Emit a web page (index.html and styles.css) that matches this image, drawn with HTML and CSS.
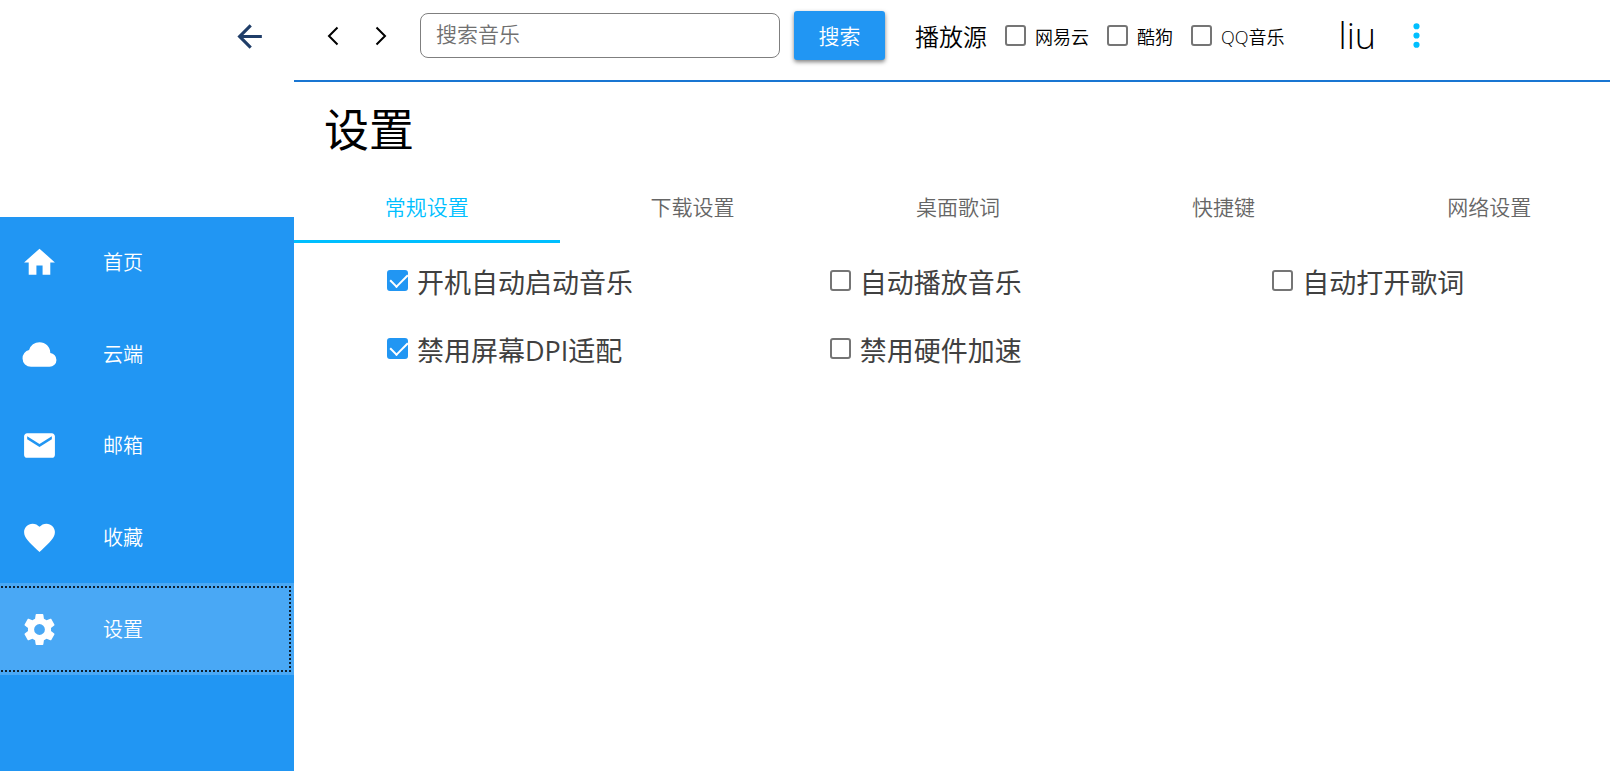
FILE: index.html
```html
<!DOCTYPE html>
<html lang="zh-CN">
<head>
<meta charset="utf-8">
<title>设置</title>
<link rel="stylesheet" href="styles.css">
</head>
<body>
<div class="app">
  <aside class="sidebar">
    <div class="sidebar-top">
      <button class="icon-button back" type="button" aria-label="返回"><svg class="icon" viewBox="0 0 24 24"><path d="M20,11V13H8L13.5,18.5L12.08,19.92L4.16,12L12.08,4.08L13.5,5.5L8,11H20Z"/></svg></button>
    </div>
    <nav class="menu">
      <a class="menu-item" href="#home"><svg class="icon" viewBox="0 0 24 24"><path d="M10,20V14H14V20H19V12H22L12,3L2,12H5V20H10Z"/></svg><span>首页</span></a>
      <a class="menu-item" href="#cloud"><svg class="icon" viewBox="0 0 24 24"><path d="M6.5 20Q4.22 20 2.61 18.43 1 16.85 1 14.58 1 12.63 2.17 11.1 3.35 9.57 5.25 9.15 5.88 6.85 7.75 5.43 9.63 4 12 4 14.93 4 16.96 6.04 19 8.07 19 11 20.73 11.2 21.86 12.5 23 13.78 23 15.5 23 17.38 21.69 18.69 20.38 20 18.5 20Z"/></svg><span>云端</span></a>
      <a class="menu-item" href="#mail"><svg class="icon" viewBox="0 0 24 24"><path d="M20,8L12,13L4,8V6L12,11L20,6M20,4H4C2.89,4 2,4.89 2,6V18A2,2 0 0,0 4,20H20A2,2 0 0,0 22,18V6C22,4.89 21.1,4 20,4Z"/></svg><span>邮箱</span></a>
      <a class="menu-item" href="#favorites"><svg class="icon" viewBox="0 0 24 24"><path d="M12,21.35L10.55,20.03C5.4,15.36 2,12.27 2,8.5C2,5.41 4.42,3 7.5,3C9.24,3 10.91,3.81 12,5.08C13.09,3.81 14.76,3 16.5,3C19.58,3 22,5.41 22,8.5C22,12.27 18.6,15.36 13.45,20.03L12,21.35Z"/></svg><span>收藏</span></a>
      <a class="menu-item active" href="#settings"><svg class="icon" viewBox="0 0 24 24"><path d="M12,15.5A3.5,3.5 0 0,1 8.5,12A3.5,3.5 0 0,1 12,8.5A3.5,3.5 0 0,1 15.5,12A3.5,3.5 0 0,1 12,15.5M19.43,12.97C19.47,12.65 19.5,12.33 19.5,12C19.5,11.67 19.47,11.34 19.43,11L21.54,9.37C21.73,9.22 21.78,8.95 21.66,8.73L19.66,5.27C19.54,5.05 19.27,4.96 19.05,5.05L16.56,6.05C16.04,5.66 15.5,5.32 14.87,5.07L14.5,2.42C14.46,2.18 14.25,2 14,2H10C9.75,2 9.54,2.18 9.5,2.42L9.13,5.07C8.5,5.32 7.96,5.66 7.44,6.05L4.95,5.05C4.73,4.96 4.46,5.05 4.34,5.27L2.34,8.73C2.21,8.95 2.27,9.22 2.46,9.37L4.57,11C4.53,11.34 4.5,11.67 4.5,12C4.5,12.33 4.53,12.65 4.57,12.97L2.46,14.63C2.27,14.78 2.21,15.05 2.34,15.27L4.34,18.73C4.46,18.95 4.73,19.03 4.95,18.95L7.44,17.94C7.96,18.34 8.5,18.68 9.13,18.93L9.5,21.58C9.54,21.82 9.75,22 10,22H14C14.25,22 14.46,21.82 14.5,21.58L14.87,18.93C15.5,18.67 16.04,18.34 16.56,17.94L19.05,18.95C19.27,19.03 19.54,18.95 19.66,18.73L21.66,15.27C21.78,15.05 21.73,14.78 21.54,14.63L19.43,12.97Z"/></svg><span>设置</span></a>
    </nav>
  </aside>

  <main class="main">
    <header class="toolbar">
      <div class="history">
        <button class="icon-button" type="button" aria-label="后退"><svg class="chevron" viewBox="0 0 12 20"><path d="M10.500 1.500L2 10L10.500 18.500"/></svg></button>
        <button class="icon-button" type="button" aria-label="前进"><svg class="chevron" viewBox="0 0 12 20"><path d="M1.500 1.500L10 10L1.500 18.500"/></svg></button>
      </div>
      <form class="search">
        <input class="search-box" type="text" placeholder="搜索音乐" aria-label="搜索音乐">
        <button class="search-button" type="button">搜索</button>
      </form>
      <div class="sources">
        <span class="sources-title">播放源</span>
        <label class="source"><input class="check" type="checkbox"><span>网易云</span></label>
        <label class="source"><input class="check" type="checkbox"><span>酷狗</span></label>
        <label class="source"><input class="check" type="checkbox"><span>QQ音乐</span></label>
      </div>
      <span class="user">liu</span>
      <button class="icon-button more" type="button" aria-label="更多"><svg class="icon" viewBox="0 0 24 24"><path d="M12,16A2,2 0 0,1 14,18A2,2 0 0,1 12,20A2,2 0 0,1 10,18A2,2 0 0,1 12,16M12,10A2,2 0 0,1 14,12A2,2 0 0,1 12,14A2,2 0 0,1 10,12A2,2 0 0,1 12,10M12,4A2,2 0 0,1 14,6A2,2 0 0,1 12,8A2,2 0 0,1 10,6A2,2 0 0,1 12,4Z"/></svg></button>
    </header>

    <h1 class="title">设置</h1>

    <div class="panel">
      <div class="tabs" role="tablist">
        <button class="tab selected" type="button" role="tab" aria-selected="true">常规设置</button>
        <button class="tab" type="button" role="tab">下载设置</button>
        <button class="tab" type="button" role="tab">桌面歌词</button>
        <button class="tab" type="button" role="tab">快捷键</button>
        <button class="tab" type="button" role="tab">网络设置</button>
      </div>
      <div class="options">
        <label class="option"><input class="check" type="checkbox" checked><span>开机自动启动音乐</span></label>
        <label class="option"><input class="check" type="checkbox"><span>自动播放音乐</span></label>
        <label class="option"><input class="check" type="checkbox"><span>自动打开歌词</span></label>
        <label class="option"><input class="check" type="checkbox" checked><span>禁用屏幕DPI适配</span></label>
        <label class="option"><input class="check" type="checkbox"><span>禁用硬件加速</span></label>
      </div>
    </div>
  </main>
</div>
</body>
</html>
```

FILE: styles.css
```css
* {
  box-sizing: border-box;
}

body {
  margin: 0;
  background: #fff;
  color: #000;
  font-family: "Open Sans", "Noto Sans CJK SC", sans-serif;
  font-weight: 350;
}

button,
input {
  margin: 0;
  font: inherit;
}

.app {
  display: flex;
  min-height: 100vh;
  overflow: hidden;
}

.icon {
  display: block;
  width: 37px;
  height: 37px;
  fill: currentColor;
}

.icon-button {
  display: block;
  padding: 0;
  border: 0;
  background: none;
  color: inherit;
}

/* Sidebar */

.sidebar {
  display: flex;
  flex: 0 0 294px;
  flex-direction: column;
  background: #2196f3;
}

.sidebar-top {
  display: flex;
  align-items: flex-start;
  justify-content: flex-end;
  height: 217px;
  padding: 18px 26px;
  background: #fff;
}

.back {
  color: #1f3d68;
}

.menu {
  display: grid;
  grid-auto-rows: 1fr;
  min-height: 458px;
}

.menu-item {
  position: relative;
  display: flex;
  align-items: center;
  gap: 45px;
  padding-left: 21px;
  overflow: hidden;
  color: #fff;
  font-size: 20px;
  line-height: 28px;
  text-decoration: none;
}

.menu-item span {
  padding-top: 1px;
}

.menu-item.active {
  background: #49a8f5;
}

.menu-item.active::after {
  position: absolute;
  inset: 3px 3px 3px -3px;
  border: 2px dotted rgba(0, 0, 0, 0.8);
  content: "";
}

/* Toolbar */

.toolbar {
  display: flex;
  align-items: center;
  height: 82px;
  padding: 0 30px 9px 33px;
  border-bottom: 2px solid #1976d2;
}

.history {
  display: flex;
  gap: 36px;
}

.chevron {
  display: block;
  width: 12px;
  height: 20px;
  fill: none;
  stroke: #000;
  stroke-width: 2;
}

.search {
  display: flex;
  align-items: center;
  gap: 14px;
  margin-left: 33px;
}

.search-box {
  width: 360px;
  height: 45px;
  padding: 0 15px 3px;
  border: 1px solid #7f7f7f;
  border-radius: 8px;
  outline: 0;
  background: #fff;
  font-size: 21px;
}

.search-box::placeholder {
  color: #707070;
  opacity: 1;
}

.search-button {
  width: 91px;
  height: 49px;
  padding: 0 0 2px;
  border: 0;
  border-radius: 3px;
  background: #2196f3;
  box-shadow: 0 2px 4px rgba(0, 0, 0, 0.5);
  color: #fff;
  font-size: 21px;
}

.sources {
  display: flex;
  align-items: center;
  gap: 18px;
  margin-left: 30px;
}

.sources-title {
  font-size: 24px;
}

.source {
  display: flex;
  align-items: center;
  gap: 9px;
  font-size: 18px;
}

.source span {
  padding-top: 1px;
}

.user {
  margin-left: 54px;
  font-size: 36px;
  font-weight: 300;
  line-height: 48px;
}

.more {
  margin-left: 22px;
  color: #00bfff;
}

.check {
  position: relative;
  flex: none;
  width: 21px;
  height: 21px;
  border: 2px solid #757575;
  border-radius: 3px;
  appearance: none;
}

.check:checked {
  border-color: #2196f3;
  background: #2196f3;
}

.check:checked::after {
  position: absolute;
  top: -2px;
  left: 5px;
  width: 8px;
  height: 15px;
  border: solid #fff;
  border-width: 0 2px 2px 0;
  content: "";
  transform: rotate(45deg);
}

/* Settings */

.main {
  flex: 1;
  min-width: 0;
}

.title {
  margin: 0;
  padding: 16px 30px 0;
  font-size: 45px;
  font-weight: 400;
  line-height: 64px;
}

/* The panel runs 12px past the window edge. */
.panel {
  margin-right: -12px;
}

.tabs {
  display: grid;
  grid-template-columns: repeat(5, 1fr);
  padding-top: 11px;
}

.tab {
  height: 70px;
  padding: 0 0 2px;
  border: solid transparent;
  border-width: 0 0 3px;
  background: none;
  color: #666;
  font-size: 21px;
}

.tab.selected {
  border-color: #00bfff;
  color: #00bfff;
}

.options {
  display: grid;
  grid-template-columns: repeat(3, 1fr);
  row-gap: 28px;
  padding-top: 20px;
}

.option {
  display: flex;
  align-items: flex-start;
  gap: 9px;
  padding-left: 93px;
  color: #404040;
  font-size: 27px;
  font-weight: 400;
  line-height: 40px;
}

.option .check {
  margin-top: 7px;
}
```
